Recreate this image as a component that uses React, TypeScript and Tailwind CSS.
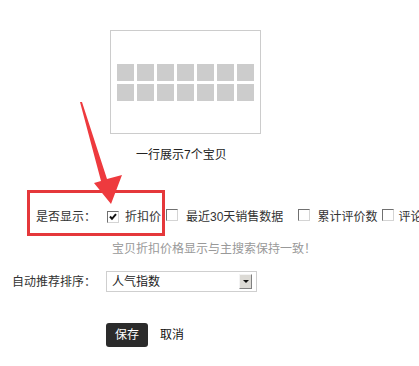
import React from "react"

const squares = Array.from({ length: 14 })

function Checkbox({ checked = false }: { checked?: boolean }) {
  return (
    <span className="inline-flex h-[12px] w-[12px] shrink-0 items-center justify-center border border-t-[#707070] border-l-[#707070] border-r-[#d4d4d4] border-b-[#d4d4d4] bg-white">
      {checked && (
        <svg width="8" height="8" viewBox="0 0 8 8">
          <path d="M1 3.5 L3 5.8 L7 1.2" fill="none" stroke="#111" strokeWidth="2" />
        </svg>
      )}
    </span>
  )
}

export default function App() {
  return (
    <div
      className="relative h-[366px] w-[419px] overflow-hidden bg-white text-[12px] text-[#333]"
      style={{ fontFamily: '"Liberation Sans", "Noto Sans CJK SC", sans-serif' }}
    >
      {/* preview of the item row */}
      <div className="pl-[110px] pt-[30px]">
        <div className="flex h-[104px] w-[151px] items-center justify-center border border-[#cccccc]">
          <div className="grid grid-cols-7 gap-[3px]">
            {squares.map((_, i) => (
              <div key={i} className="h-[17px] w-[17px] bg-[#cccccc]" />
            ))}
          </div>
        </div>
        <div className="mt-[13px] pl-[26px] leading-[16px] text-[#222]">一行展示7个宝贝</div>
      </div>

      {/* show options */}
      <div className="mt-[44px] flex h-[20px] items-center whitespace-nowrap">
        <div className="w-[96px] shrink-0 text-right">是否显示：</div>
        <div className="ml-[11px] flex items-center">
          <Checkbox checked />
          <span className="ml-[6px]">折扣价</span>
          <span className="ml-[5px]">
            <Checkbox />
          </span>
          <span className="ml-[8px]">最近30天销售数据</span>
          <span className="ml-[15px]">
            <Checkbox />
          </span>
          <span className="ml-[7px]">累计评价数</span>
          <span className="ml-[5px]">
            <Checkbox />
          </span>
          <span className="ml-[4px]">评论数</span>
        </div>
      </div>
      <div className="mt-[14px] pl-[112px] leading-[16px] text-[#999999]">宝贝折扣价格显示与主搜索保持一致！</div>

      {/* sort select */}
      <div className="mt-[14px] flex items-center">
        <div className="w-[96px] shrink-0 text-right">自动推荐排序：</div>
        <div className="ml-[10px] flex h-[21px] w-[151px] items-center justify-between border border-[#cfcfcf] bg-white pl-[5px] pr-[4px]">
          <span className="text-[#222]">人气指数</span>
          <span className="flex h-[15px] w-[13px] items-center justify-center border border-t-[#f4f4f4] border-l-[#f4f4f4] border-r-[#808080] border-b-[#808080] bg-[#dcdad5]">
            <svg width="6" height="4" viewBox="0 0 6 4">
              <path d="M0 0 H6 L3 3 Z" fill="#111" />
            </svg>
          </span>
        </div>
      </div>

      {/* actions */}
      <div className="mt-[31px] flex items-center pl-[106px]">
        <button className="flex h-[24px] w-[42px] items-center justify-center rounded-[3px] bg-[#2b2b2b] text-white">
          保存
        </button>
        <button className="ml-[12px] text-[#111]">取消</button>
      </div>

      {/* red annotation */}
      <div className="absolute left-[27px] top-[190px] h-[46px] w-[138px] border-[3px] border-[#e5383b]" />
      <svg className="absolute left-0 top-0" width="419" height="366" viewBox="0 0 419 366">
        <polygon
          points="80,102 82,102 107,179 122,175 111,204 94,183 101,181"
          fill="#ee3a3e"
        />
      </svg>
    </div>
  )
}
